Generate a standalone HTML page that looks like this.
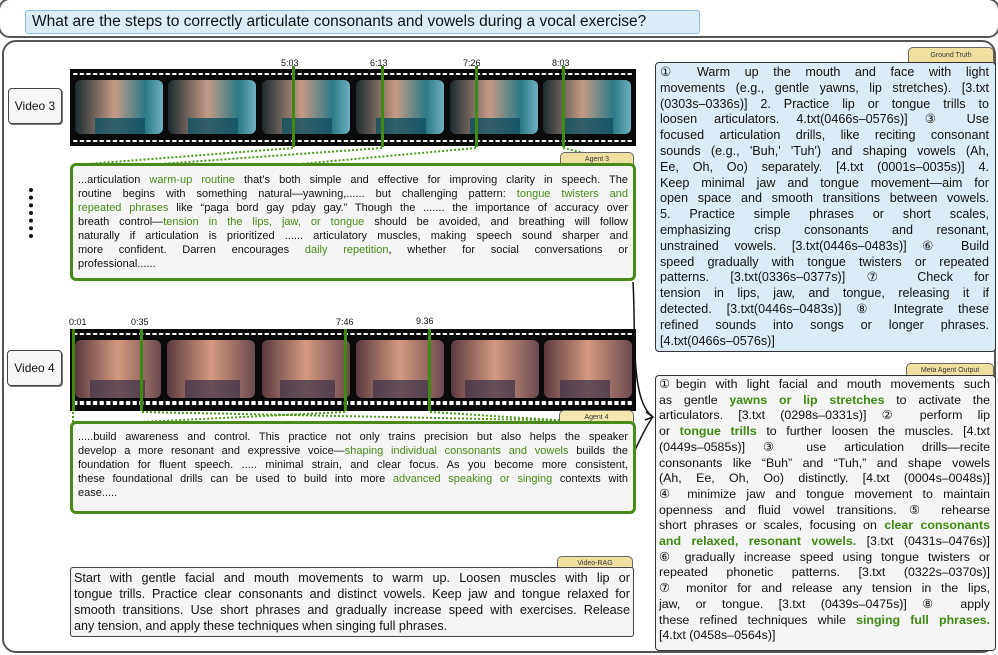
<!DOCTYPE html>
<html><head><meta charset="utf-8"><style>
*{margin:0;padding:0;box-sizing:border-box}
body{width:998px;height:655px;background:#fff;position:relative;overflow:hidden;font-family:"Liberation Sans","DejaVu Sans",sans-serif;color:#111}
.abs{position:absolute}
.panel{position:absolute;border:2px solid #555;border-radius:14px;background:#fff}
.q{position:absolute;left:25px;top:10px;width:675px;height:24px;background:#dcedf8;border:1px solid #8fbfe0;border-radius:3px;font-size:15.5px;line-height:22px;padding-left:6px;white-space:nowrap}
.vl{position:absolute;border:1px solid #444;border-radius:4px;background:#f6f6f6;font-size:12px;text-align:center;box-shadow:1px 1px 0 #777}
.tab{position:absolute;background:#efe0a0;border:1px solid #666;border-bottom:none;border-radius:5px 5px 0 0;font-size:7px;text-align:center;line-height:13px;color:#333}
.box{position:absolute;border-radius:6px}
.j div{text-align:justify;text-align-last:justify;white-space:nowrap}
.j div.l{text-align-last:left}
.g{color:#4a8a1a}
.gb{color:#3f8a12;font-weight:bold}
.ts{position:absolute;font-size:9px;color:#111}
</style></head><body>
<div class="panel" style="left:-2px;top:-2px;width:1002px;height:40px;border-radius:12px"></div>
<div class="q">What are the steps to correctly articulate consonants and vowels during a vocal exercise?</div>
<div class="panel" style="left:2px;top:40px;width:994px;height:613px"></div>

<div class="vl" style="left:8px;top:88px;width:54px;height:36px;line-height:34px">Video 3</div>
<div class="vl" style="left:7px;top:350px;width:55px;height:36px;line-height:34px">Video 4</div>
<div class="abs" style="left:29px;top:188px;width:4px;height:50px;border-left:4px dotted #111"></div>

<svg class="abs" style="left:0;top:0" width="998" height="655">
<defs>
<pattern id="sp" x="72" y="0" width="6.6" height="10" patternUnits="userSpaceOnUse"><rect x="1.2" y="0" width="4.2" height="5" fill="#fff"/></pattern>
<linearGradient id="f3" x1="0" y1="0" x2="1" y2="0"><stop offset="0" stop-color="#1c2b30"/><stop offset=".45" stop-color="#c49a86"/><stop offset=".8" stop-color="#2a7a85"/><stop offset="1" stop-color="#6fb0c0"/></linearGradient>
<linearGradient id="f4" x1="0" y1="0" x2="1" y2="0"><stop offset="0" stop-color="#5a3a40"/><stop offset=".5" stop-color="#d49a80"/><stop offset="1" stop-color="#6a4a50"/></linearGradient>
</defs>
<rect x="70" y="69" width="566" height="77" fill="#0a0a0a"/>
<rect x="72" y="73" width="562" height="5" fill="url(#sp)"/>
<rect x="72" y="137" width="562" height="5" fill="url(#sp)"/>
<g fill="url(#f3)">
<rect x="75" y="80" width="88" height="54" rx="6"/><rect x="168" y="80" width="88" height="54" rx="6"/><rect x="262" y="80" width="88" height="54" rx="6"/><rect x="356" y="80" width="88" height="54" rx="6"/><rect x="450" y="80" width="88" height="54" rx="6"/><rect x="543" y="80" width="88" height="54" rx="6"/>
</g>
<g fill="#0f5060" opacity=".8"><rect x="95" y="118" width="50" height="16"/><rect x="188" y="118" width="50" height="16"/><rect x="282" y="118" width="50" height="16"/><rect x="376" y="118" width="50" height="16"/><rect x="470" y="118" width="50" height="16"/><rect x="563" y="118" width="50" height="16"/></g>
<g fill="#3f8a12"><rect x="292" y="66" width="3" height="81"/><rect x="381" y="66" width="3" height="81"/><rect x="475" y="66" width="3" height="81"/><rect x="562" y="66" width="3" height="81"/></g>
<g stroke="#4a9a1a" stroke-width="2" stroke-dasharray="2 2" fill="none">
<path d="M293 148 L74 165"/><path d="M382 148 L160 164"/><path d="M476 148 L300 164"/><path d="M563 148 L634 165"/>
</g>
<rect x="70" y="329" width="566" height="82" fill="#0a0a0a"/>
<rect x="72" y="333" width="562" height="5" fill="url(#sp)"/>
<rect x="72" y="401" width="562" height="5" fill="url(#sp)"/>
<g fill="url(#f4)">
<rect x="75" y="340" width="86" height="58" rx="6"/><rect x="167" y="340" width="88" height="58" rx="6"/><rect x="262" y="340" width="88" height="58" rx="6"/><rect x="356" y="340" width="88" height="58" rx="6"/><rect x="451" y="340" width="88" height="58" rx="6"/><rect x="544" y="340" width="88" height="58" rx="6"/>
</g>
<g fill="#3a3048" opacity=".7"><rect x="90" y="380" width="55" height="18"/><rect x="185" y="380" width="55" height="18"/><rect x="280" y="380" width="55" height="18"/><rect x="373" y="380" width="55" height="18"/><rect x="465" y="380" width="50" height="18"/><rect x="560" y="380" width="50" height="18"/></g>
<g fill="#3f8a12"><rect x="72" y="329" width="3" height="82"/><rect x="140" y="329" width="3" height="82"/><rect x="344" y="329" width="3" height="82"/><rect x="428" y="329" width="3" height="82"/></g>
<g stroke="#4a9a1a" stroke-width="2" stroke-dasharray="2 2" fill="none">
<path d="M73 412 L73 424"/><path d="M142 412 L634 422"/><path d="M345 412 L100 424"/><path d="M430 412 L634 425"/>
</g>
<path d="M633 282 C636 330 630 400 652 416" stroke="#111" stroke-width="1.5" fill="none"/>
<path d="M634 452 C640 440 645 428 652 418" stroke="#111" stroke-width="1.5" fill="none"/>
<path d="M646 412 L653 417 L645 420" stroke="#111" stroke-width="1.5" fill="none"/>
</svg>

<div class="ts" style="left:281px;top:58px">5:03</div>
<div class="ts" style="left:370px;top:58px">6:13</div>
<div class="ts" style="left:463px;top:58px">7:26</div>
<div class="ts" style="left:552px;top:58px">8:03</div>
<div class="ts" style="left:69px;top:317px">0:01</div>
<div class="ts" style="left:131px;top:317px">0:35</div>
<div class="ts" style="left:336px;top:317px">7:46</div>
<div class="ts" style="left:416px;top:316px">9.36</div>

<div class="tab" style="left:560px;top:152px;width:74px;height:13px">Agent 3</div>
<div class="box j" style="left:70px;top:163px;width:566px;height:118px;border:3px solid #4a8a1a;background:#f5f5f5;font-size:11px;line-height:14px;padding:7px 5px 0 5px">
<div>...articulation <span class="g">warm-up routine</span> that’s both simple and effective for improving clarity in speech. The</div>
<div>routine begins with something natural—yawning,...... but challenging pattern: <span class="g">tongue twisters and</span></div>
<div><span class="g">repeated phrases</span> like “paga bord gay pday gay.” Though the ....... the importance of accuracy over</div>
<div>breath control—<span class="g">tension in the lips, jaw, or tongue</span> should be avoided, and breathing will follow</div>
<div>naturally if articulation is prioritized ......  articulatory muscles, making speech sound sharper and</div>
<div>more confident. Darren encourages <span class="g">daily repetition</span>, whether for social conversations or</div>
<div class="l">professional......</div>
</div>

<div class="tab" style="left:559px;top:410px;width:75px;height:12px;background:#f3e8b0">Agent 4</div>
<div class="box j" style="left:70px;top:421px;width:566px;height:93px;border:3px solid #4a8a1a;background:#f5f5f5;font-size:11px;line-height:14px;padding:6px 5px 0 5px">
<div>.....build awareness and control. This practice not only trains precision but also helps the speaker</div>
<div>develop a more resonant and expressive voice—<span class="g">shaping individual consonants and vowels</span> builds the</div>
<div>foundation for fluent speech. ..... minimal strain, and clear focus. As you become more consistent,</div>
<div>these foundational drills can be used to build into more <span class="g">advanced speaking or singing</span> contexts with</div>
<div class="l">ease.....</div>
</div>

<div class="tab" style="left:557px;top:556px;width:76px;height:12px">Video-RAG</div>
<div class="box j" style="left:70px;top:567px;width:564px;height:70px;border:1px solid #444;border-radius:3px;background:#f5f5f5;font-size:12.6px;line-height:16px;padding:2px 3px 0 3px">
<div>Start with gentle facial and mouth movements to warm up. Loosen muscles with lip or</div>
<div>tongue trills. Practice clear consonants and distinct vowels. Keep jaw and tongue relaxed for</div>
<div>smooth transitions. Use short phrases and gradually increase speed with exercises. Release</div>
<div class="l">any tension, and apply these techniques when singing full phrases.</div>
</div>

<div class="tab" style="left:908px;top:47px;width:86px;height:15px;line-height:15px">Ground Truth</div>
<div class="box j" style="left:655px;top:62px;width:341px;height:290px;border:1px solid #333;border-radius:4px;background:#dcecf6;font-size:12.6px;line-height:15.8px;padding:2px 6px 0 4px">
<div>① Warm up the mouth and face with light</div>
<div>movements (e.g., gentle yawns, lip stretches). [3.txt</div>
<div>(0303s–0336s)]  2. Practice lip or tongue trills to</div>
<div>loosen articulators. 4.txt(0466s–0576s)] ③ Use</div>
<div>focused articulation drills, like reciting consonant</div>
<div>sounds (e.g., 'Buh,' 'Tuh') and shaping vowels (Ah,</div>
<div>Ee, Oh, Oo) separately. [4.txt (0001s–0035s)] 4.</div>
<div>Keep minimal jaw and tongue movement—aim for</div>
<div>open space and smooth transitions between vowels.</div>
<div>5. Practice simple phrases or short scales,</div>
<div>emphasizing crisp consonants and resonant,</div>
<div>unstrained vowels. [3.txt(0446s–0483s)] ⑥ Build</div>
<div>speed gradually with tongue twisters or repeated</div>
<div>patterns. [3.txt(0336s–0377s)] ⑦ Check for</div>
<div>tension in lips, jaw, and tongue, releasing it if</div>
<div>detected. [3.txt(0446s–0483s)] ⑧ Integrate these</div>
<div>refined sounds into songs or longer phrases.</div>
<div class="l">[4.txt(0466s–0576s)]</div>
</div>

<div class="tab" style="left:906px;top:363px;width:88px;height:13px">Meta Agent Output</div>
<div class="box j" style="left:655px;top:375px;width:341px;height:276px;border:1px solid #333;border-radius:4px;background:#f5f5f5;font-size:12.4px;line-height:15.7px;padding:1px 5px 0 3px">
<div>①begin with light facial and mouth movements such</div>
<div>as gentle <span class="gb">yawns or lip stretches</span> to activate the</div>
<div>articulators. [3.txt (0298s–0331s)] ② perform lip</div>
<div>or <span class="gb">tongue trills</span> to further loosen the muscles. [4.txt</div>
<div>(0449s–0585s)] ③ use articulation drills—recite</div>
<div>consonants like “Buh” and “Tuh,” and shape vowels</div>
<div>(Ah, Ee, Oh, Oo) distinctly. [4.txt (0004s–0048s)]</div>
<div>④ minimize jaw and tongue movement to maintain</div>
<div>openness and fluid vowel transitions. ⑤ rehearse</div>
<div>short phrases or scales, focusing on <span class="gb">clear consonants</span></div>
<div><span class="gb">and relaxed, resonant vowels.</span> [3.txt (0431s–0476s)]</div>
<div>⑥ gradually increase speed using tongue twisters or</div>
<div>repeated phonetic patterns. [3.txt (0322s–0370s)]</div>
<div>⑦ monitor for and release any tension in the lips,</div>
<div>jaw, or tongue. [3.txt (0439s–0475s)] ⑧ apply</div>
<div>these refined techniques while <span class="gb">singing full phrases.</span></div>
<div class="l">[4.txt (0458s–0564s)]</div>
</div>
</body></html>
